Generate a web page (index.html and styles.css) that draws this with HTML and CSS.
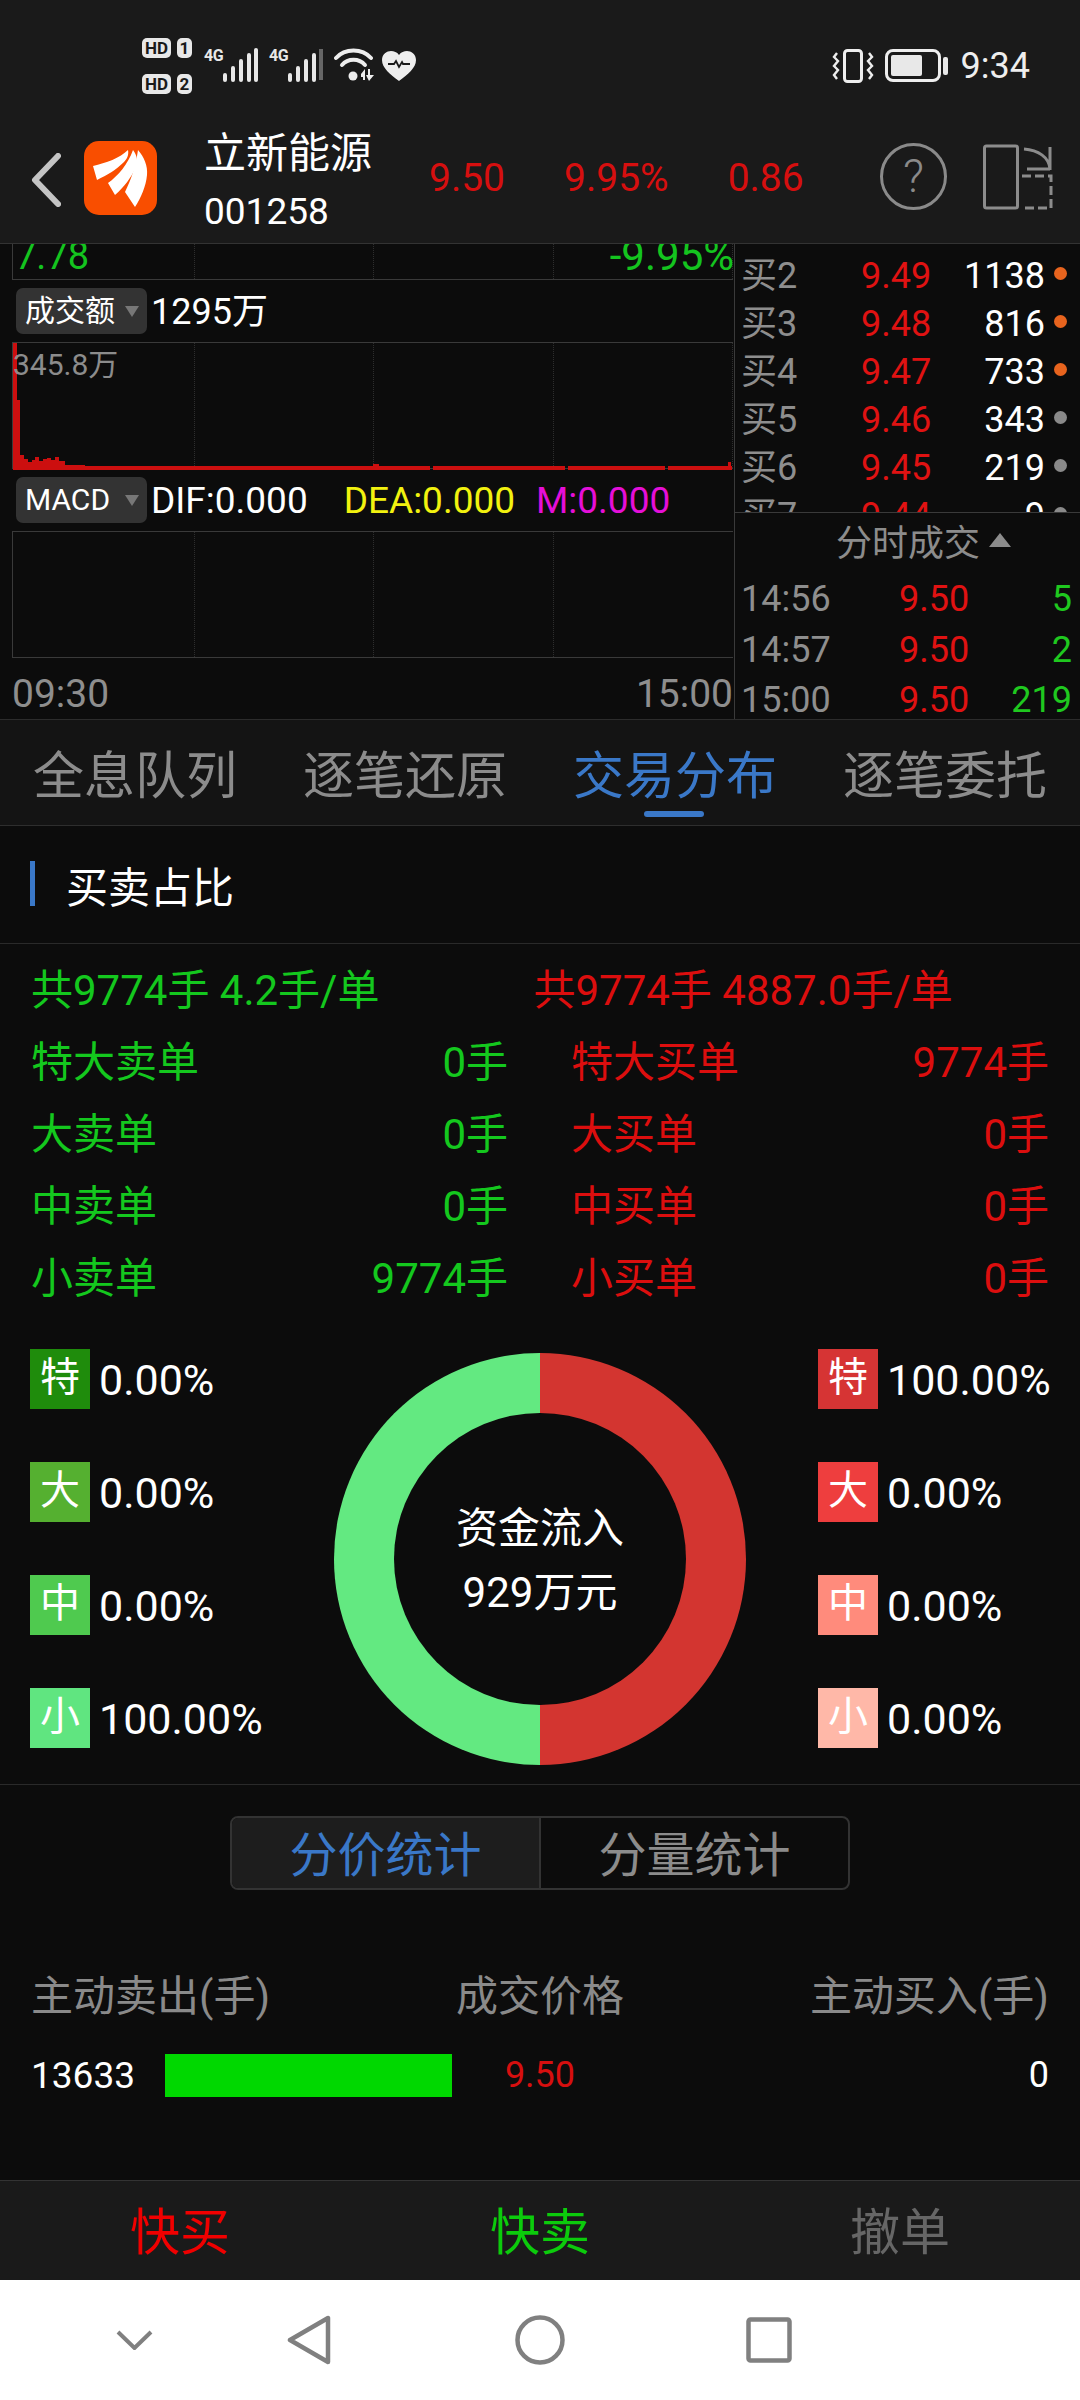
FILE: index.html
```html
<!DOCTYPE html>
<html lang="zh-CN">
<head>
<meta charset="utf-8">
<title>立新能源 001258</title>
<link rel="stylesheet" href="styles.css">
</head>
<body>
<div class="app">
  <div class="status">
    <div class="sims">
      <div class="sim"><span class="hd">HD</span><span class="simno">1</span></div>
      <div class="sim"><span class="hd">HD</span><span class="simno">2</span></div>
    </div>
    <div class="net"><span class="fourg">4G</span>
      <svg class="bars" width="36" height="34" viewBox="0 0 36 34"><g fill="none" stroke="#e8e8e8" stroke-width="4" stroke-linecap="round"><path d="M3 27v5M11 20v12M19 13v19M27 7v25"/><path d="M34 2v30"/></g></svg>
    </div>
    <div class="net second"><span class="fourg">4G</span>
      <svg class="bars" width="36" height="34" viewBox="0 0 36 34"><g fill="none" stroke-width="4" stroke-linecap="round"><path stroke="#e8e8e8" d="M3 27v5M11 20v12M19 13v19M27 7v25"/><path stroke="#666" stroke-linecap="butt" d="M34 1v31"/></g></svg>
    </div>
    <svg class="wifi" width="41" height="34" viewBox="0 0 41 34"><g fill="none" stroke="#eee" stroke-width="4" stroke-linecap="round"><path d="M2 10C11 0 28 0 37 10"/><path d="M8 17C14 10 25 10 31 17"/></g><circle cx="19" cy="28" r="4.5" fill="#eee"/><path d="M27 26l4-5v11h-2v-3h-2zM34 21h2v6h4l-5 6-3-6h2z" fill="#eee"/></svg>
    <svg class="heart" width="34" height="30" viewBox="0 0 34 30"><path d="M17 30C8 23 0 17 0 9 0 3 5 0 9 0c3 0 6 1 8 4 2-3 5-4 8-4 4 0 9 3 9 9 0 8-8 14-17 21z" fill="#eee"/><path d="M6 13h6l2-3 3 6 3-5 1 2h7" fill="none" stroke="#1a1a1a" stroke-width="1.8"/></svg>
    <div class="status-right">
      <svg class="vibrate" width="42" height="34" viewBox="0 0 42 34"><rect x="12.5" y="1.5" width="17" height="31" rx="3" fill="none" stroke="#eee" stroke-width="3"/><g fill="none" stroke="#eee" stroke-width="2.4"><path d="M5 4l-3 4 4 4-4 5 4 4-4 5 3 4"/><path d="M37 4l3 4-4 4 4 5-4 4 4 5-3 4"/></g></svg>
      <div class="battery"><span class="battery-fill"></span></div>
      <span class="battery-tip"></span>
      <span class="clock">9:34</span>
    </div>
  </div>

  <header class="header">
    <svg class="back" width="30" height="54" viewBox="0 0 30 54"><path d="M27 3L4 27l23 24" fill="none" stroke="#c4c4c4" stroke-width="6" stroke-linecap="round" stroke-linejoin="round"/></svg>
    <svg class="logo" width="73" height="74" viewBox="0 0 73 74"><rect width="73" height="74" rx="15" fill="#f94e00"/><g fill="#fff"><path d="M9 25C22 22 36 17 44 9 45 14 43 18 40 21 32 29 23 34 13 39Z"/><path d="M24 42C34 35 44 23 49 9 53 14 54 20 52 26 47 37 40 46 31 54Z"/><path d="M41 51C47 39 52 24 54 9 60 16 64 25 63 34 62 45 57 57 51 66Z"/></g></svg>
    <div class="stock">
      <div class="stock-name">立新能源</div>
      <div class="stock-code">001258</div>
    </div>
    <div class="quote-nums"><span>9.50</span><span>9.95%</span><span>0.86</span></div>
    <div class="help">?</div>
    <svg class="split" width="72" height="66" viewBox="0 0 72 66"><g fill="none" stroke="#8c8c8c" stroke-width="3"><rect x="1.5" y="2" width="33" height="62" rx="2"/><path d="M41 5c14 1 25 8 26 20M67 3v23M44 25h23"/><path d="M39 32h29v32H39" stroke-dasharray="9 4"/></g></svg>
  </header>

  <section class="market">
    <div class="chart">
      <div class="grid-panel price-tail">
        <span class="cell"></span><span class="cell"></span><span class="cell"></span><span class="cell"></span>
        <span class="tail-low">7.78</span><span class="tail-pct">-9.95%</span>
      </div>
      <div class="indicator">
        <span class="pill">成交额<i class="caret"></i></span>
        <span class="ind-value">1295万</span>
      </div>
      <div class="grid-panel vol-panel">
        <span class="cell"></span><span class="cell"></span><span class="cell"></span><span class="cell"></span>
        <span class="vol-max">345.8万</span>
        <svg class="vol-bars" width="721" height="127" viewBox="0 0 721 127" preserveAspectRatio="none"><g fill="#cc0f0f"><rect x="0" y="0" width="4" height="127"/><rect x="4" y="57" width="3" height="70"/><rect x="7" y="112" width="4" height="15"/><rect x="11" y="116" width="4" height="11"/><rect x="15" y="119" width="4" height="8"/><rect x="19" y="117" width="3" height="10"/><rect x="22" y="114" width="4" height="13"/><rect x="26" y="118" width="4" height="9"/><rect x="30" y="116" width="4" height="11"/><rect x="34" y="115" width="4" height="12"/><rect x="38" y="117" width="4" height="10"/><rect x="42" y="114" width="4" height="13"/><rect x="46" y="118" width="6" height="9"/><rect x="52" y="122" width="20" height="5"/><rect x="52" y="123" width="365" height="4"/><rect x="360" y="121" width="6" height="6"/><rect x="420" y="123" width="132" height="4"/><rect x="555" y="123" width="97" height="4"/><rect x="655" y="123" width="64" height="4"/><rect x="715" y="119" width="3" height="8"/></g></svg>
      </div>
      <div class="indicator">
        <span class="pill">MACD<i class="caret"></i></span>
        <span class="ind-value macd-v">DIF:0.000</span>
        <span class="ind-value macd-v dea">DEA:0.000</span>
        <span class="ind-value macd-v macd-m">M:0.000</span>
      </div>
      <div class="grid-panel macd-panel">
        <span class="cell"></span><span class="cell"></span><span class="cell"></span><span class="cell"></span>
      </div>
      <div class="axis"><span>09:30</span><span>15:00</span></div>
    </div>
    <aside class="side">
      <div class="depth">
        <div class="depth-row"><span class="d-label">买2</span><span class="d-price">9.49</span><span class="d-qty">1138</span><i class="dot hot"></i></div>
        <div class="depth-row"><span class="d-label">买3</span><span class="d-price">9.48</span><span class="d-qty">816</span><i class="dot hot"></i></div>
        <div class="depth-row"><span class="d-label">买4</span><span class="d-price">9.47</span><span class="d-qty">733</span><i class="dot hot"></i></div>
        <div class="depth-row"><span class="d-label">买5</span><span class="d-price">9.46</span><span class="d-qty">343</span><i class="dot"></i></div>
        <div class="depth-row"><span class="d-label">买6</span><span class="d-price">9.45</span><span class="d-qty">219</span><i class="dot"></i></div>
        <div class="depth-row"><span class="d-label">买7</span><span class="d-price">9.44</span><span class="d-qty">9</span><i class="dot"></i></div>
      </div>
      <div class="trades">
        <div class="trades-title">分时成交<i class="tri-up"></i></div>
        <div class="trade-row"><span class="t-time">14:56</span><span class="t-price">9.50</span><span class="t-qty">5</span></div>
        <div class="trade-row"><span class="t-time">14:57</span><span class="t-price">9.50</span><span class="t-qty">2</span></div>
        <div class="trade-row"><span class="t-time">15:00</span><span class="t-price">9.50</span><span class="t-qty">219</span></div>
      </div>
    </aside>
  </section>

  <nav class="tabs">
    <span class="tab">全息队列</span>
    <span class="tab">逐笔还原</span>
    <span class="tab active">交易分布</span>
    <span class="tab">逐笔委托</span>
  </nav>

  <main class="main">
    <h2 class="section-title"><span>买卖占比</span></h2>

    <div class="flows">
      <div class="totals">
        <span class="sell">共9774手 4.2手/单</span>
        <span class="buy">共9774手 4887.0手/单</span>
      </div>
      <div class="flow-row"><div class="flow sell"><span>特大卖单</span><span>0手</span></div><div class="flow buy"><span>特大买单</span><span>9774手</span></div></div>
      <div class="flow-row"><div class="flow sell"><span>大卖单</span><span>0手</span></div><div class="flow buy"><span>大买单</span><span>0手</span></div></div>
      <div class="flow-row"><div class="flow sell"><span>中卖单</span><span>0手</span></div><div class="flow buy"><span>中买单</span><span>0手</span></div></div>
      <div class="flow-row"><div class="flow sell"><span>小卖单</span><span>9774手</span></div><div class="flow buy"><span>小买单</span><span>0手</span></div></div>
    </div>

    <div class="share">
      <ul class="legend">
        <li><b class="badge g1">特</b>0.00%</li>
        <li><b class="badge g2">大</b>0.00%</li>
        <li><b class="badge g3">中</b>0.00%</li>
        <li><b class="badge g4">小</b>100.00%</li>
      </ul>
      <div class="donut">
        <div class="donut-hole">
          <div>资金流入</div>
          <div>929万元</div>
        </div>
      </div>
      <ul class="legend legend-right">
        <li><b class="badge r1">特</b>100.00%</li>
        <li><b class="badge r2">大</b>0.00%</li>
        <li><b class="badge r3">中</b>0.00%</li>
        <li><b class="badge r4">小</b>0.00%</li>
      </ul>
    </div>

    <div class="stats">
      <div class="segment">
        <span class="seg active">分价统计</span>
        <span class="seg">分量统计</span>
      </div>
      <div class="stat-head"><span>主动卖出(手)</span><span>成交价格</span><span>主动买入(手)</span></div>
      <div class="stat-row">
        <span class="stat-left">13633</span>
        <span class="stat-bar"></span>
        <span class="stat-price">9.50</span>
        <span class="stat-right">0</span>
      </div>
    </div>
  </main>

  <div class="actions">
    <span class="act-buy">快买</span>
    <span class="act-sell">快卖</span>
    <span class="act-cancel">撤单</span>
  </div>

  <div class="sysnav">
    <svg width="37" height="20" viewBox="0 0 37 20" class="nav-down"><path d="M2 2l16.500 16L35 2" fill="none" stroke="#808080" stroke-width="4"/></svg>
    <svg width="44" height="50" viewBox="0 0 44 50" class="nav-back"><path d="M41 3v44L3 25z" fill="none" stroke="#808080" stroke-width="4.500" stroke-linejoin="round"/></svg>
    <svg width="50" height="50" viewBox="0 0 50 50" class="nav-home"><circle cx="25" cy="25" r="22.500" fill="none" stroke="#808080" stroke-width="4.500"/></svg>
    <svg width="46" height="46" viewBox="0 0 46 46" class="nav-recent"><rect x="2.500" y="2.500" width="41" height="41" rx="2" fill="none" stroke="#808080" stroke-width="4.500"/></svg>
  </div>
</div>
</body>
</html>
```

FILE: styles.css
```css
* { box-sizing: border-box; }
html, body { margin: 0; padding: 0; background: #0c0c0c; }
body { font-family: Roboto, "Noto Sans CJK SC", sans-serif; color: #fff; }
ul { list-style: none; margin: 0; padding: 0; }
i { font-style: normal; }
b { font-weight: 400; }

.app { width: 1080px; height: 2400px; display: flex; flex-direction: column; overflow: hidden; background: #0c0c0c; }

/* status bar */
.status { height: 110px; flex: none; background: #1a1a1a; display: flex; align-items: flex-start; padding: 38px 0 0 142px; }
.sims { display: flex; flex-direction: column; gap: 16px; }
.sim { display: flex; gap: 6px; }
.hd, .simno { height: 20px; background: #e8e8e8; color: #1a1a1a; font-size: 17px; line-height: 20px; font-weight: 700; text-align: center; border-radius: 5px; }
.hd { width: 29px; }
.simno { width: 15px; }
.net { display: flex; align-items: flex-start; margin: 10px 0 0 12px; position: relative; }
.net.second { margin-left: 11px; }
.fourg { width: 18px; font-size: 16px; line-height: 15px; font-weight: 700; color: #e8e8e8; letter-spacing: -0.5px; white-space: nowrap; }
.bars { display: block; }
.wifi { margin: 10px 0 0 11px; }
.heart { margin: 13px 0 0 7px; }
.status-right { margin-left: auto; display: flex; align-items: center; height: 33px; margin-top: 11px; padding-right: 50px; }
.vibrate { margin-right: 11px; }
.battery { width: 56px; height: 33px; border: 3.5px solid #eee; border-radius: 8px; padding: 3px; }
.battery-fill { display: block; width: 31px; height: 100%; background: #e8e8e8; border-radius: 2px; }
.battery-tip { width: 5px; height: 18px; background: #e8e8e8; border-radius: 2px; margin-left: 2px; }
.clock { margin-left: 13px; font-size: 36px; line-height: 33px; color: #eee; padding-top: 2px; }

/* header */
.header { height: 134px; flex: none; background: #1a1a1a; border-bottom: 1px solid #333; display: flex; align-items: center; padding-left: 31px; }
.back { flex: none; margin-right: 23px; margin-top: 6px; }
.logo { flex: none; margin-top: 2px; }
.stock { margin-left: 47px; width: 225px; flex: none; margin-top: 10px; }
.stock-name { font-size: 42px; line-height: 50px; }
.stock-code { font-size: 37px; line-height: 44px; margin-top: 11px; }
.quote-nums { display: flex; gap: 59px; width: 373px; flex: none; margin-top: 3px; color: #d60f0f; font-size: 39px; line-height: 46px; }
.help { flex: none; margin-left: 78px; width: 67px; height: 67px; border: 3px solid #8a8a8a; border-radius: 50%; color: #8a8a8a; font-size: 46px; font-weight: 300; line-height: 61px; text-align: center; }
.help + .split { margin-left: 36px; }
.split { flex: none; }

/* market */
.market { height: 476px; flex: none; display: flex; background: #0c0c0c; border-bottom: 1px solid #2c2c2c; }
.chart { width: 734px; flex: none; padding-left: 12px; padding-right: 1px; }
.side { flex: 1; border-left: 1px solid #3a3a3a; display: flex; flex-direction: column; min-width: 0; }

.grid-panel { position: relative; display: grid; grid-template-columns: 182px 179px 180px 1fr; border-left: 1px solid #3a3a3a; border-bottom: 1px solid #3a3a3a; }
.cell { border-right: 1px dotted #2e2e2e; }
.cell:last-of-type { border-right: 0; }
.price-tail { height: 36px; overflow: hidden; }
.tail-low, .tail-pct { position: absolute; bottom: 1px; line-height: 44px; color: #14c41f; font-size: 38px; }
.tail-low { left: 2px; }
.tail-pct { right: -1px; font-size: 42px; }
.vol-panel { height: 127px; border-top: 1px solid #3a3a3a; }
.macd-panel { height: 127px; border-top: 1px solid #3a3a3a; }
.vol-max { position: absolute; left: 0; top: 7px; font-size: 30px; line-height: 30px; color: #8c8c8c; z-index: 1; }
.vol-bars { position: absolute; left: 0; top: 0; width: 721px; height: 127px; }

.indicator { height: 63px; display: flex; align-items: center; margin-left: 4px; margin-top: -1px; }
.pill { width: 131px; height: 46px; background: #333; border-radius: 7px; display: flex; align-items: center; padding-left: 9px; font-size: 30px; line-height: 46px; position: relative; flex: none; }
.caret { position: absolute; right: 8px; top: 18px; border: 7px solid transparent; border-top: 11px solid #777; border-bottom: 0; }
.ind-value { margin-left: 4px; padding-top: 2px; font-size: 36px; line-height: 50px; white-space: nowrap; }
.macd-v { font-size: 37px; }
.dea { margin-left: 36px; color: #f2f20f; }
.macd-m { margin-left: 21px; color: #e50fd8; }

.axis { height: 61px; display: flex; justify-content: space-between; align-items: center; color: #8e8e8e; font-size: 39px; padding-top: 11px; }

/* depth */
.depth { height: 269px; overflow: hidden; border-bottom: 1px solid #3a3a3a; padding-top: 8px; flex: none; }
.depth-row { height: 48px; display: grid; grid-template-columns: 120px 69px 115px 22px; align-items: center; padding-left: 6px; font-size: 36px; line-height: 48px; }
.d-label { color: #8e8e8e; }
.d-price { color: #e01212; }
.d-qty { text-align: right; }
.dot { width: 13px; height: 13px; border-radius: 50%; background: #8a8a8a; margin-left: 9px; margin-top: -5px; }
.dot.hot { background: #e8641e; }

.trades { flex: 1; padding: 9px 8px 0 6px; font-size: 36px; }
.trades-title { height: 44px; color: #8c8c8c; display: flex; align-items: center; padding-left: 95px; line-height: 44px; margin-bottom: 8px; }
.tri-up { margin-left: 9px; margin-top: -8px; border: 11px solid transparent; border-bottom: 14px solid #8c8c8c; border-top: 0; }
.trade-row { height: 50.5px; display: grid; grid-template-columns: 158px 70px 1fr; align-items: center; line-height: 50px; }
.t-time { color: #8e8e8e; }
.t-price { color: #e01212; }
.t-qty { text-align: right; color: #1fc81f; }

/* tabs */
.tabs { height: 106px; flex: none; background: #141414; border-bottom: 1px solid #2e2e2e; display: flex; gap: 67px; padding-left: 33px; }
.tab { width: 203px; font-size: 51px; line-height: 60px; margin-top: 27px; color: #8c8c8c; white-space: nowrap; position: relative; }
.tab.active { color: #3a78c8; }
.tab.active::after { content: ""; position: absolute; left: 71px; top: 64px; width: 60px; height: 6px; border-radius: 3px; background: #3a78c8; }

/* content */
.main { flex: 1; display: flex; flex-direction: column; min-height: 0; background: #0c0c0c; }
.section-title { margin: 0; height: 118px; flex: none; border-bottom: 1px solid #2a2a2a; display: flex; align-items: center; padding-left: 30px; font-weight: 400; font-size: 42px; }
.section-title::before { content: ""; width: 5px; height: 45px; background: #3a78c8; margin-right: 31px; margin-top: -3px; }

.flows { padding: 11px 31px 0; flex: none; font-size: 42px; }
.totals { height: 72px; display: flex; align-items: center; font-size: 42px; line-height: 72px; white-space: nowrap; }
.totals .buy { margin-left: 154px; }
.sell { color: #14c81e; }
.buy { color: #dc0e0e; }
.flow-row { height: 72px; display: grid; grid-template-columns: 477px 478px; gap: 63px; }
.flow { display: flex; justify-content: space-between; align-items: center; line-height: 72px; }

.share { height: 470px; flex: none; border-bottom: 1px solid #2a2a2a; display: grid; grid-template-columns: 334px 412px 1fr; padding-top: 34px; }
.legend { display: flex; flex-direction: column; gap: 53px; padding-left: 30px; font-size: 43px; }
.legend li { height: 60px; padding-top: 2px; display: flex; align-items: center; white-space: nowrap; }
.legend-right { padding-left: 72px; }
.badge { width: 60px; height: 60px; flex: none; margin-top: -2px; text-align: center; line-height: 58px; font-size: 40px; margin-right: 9px; color: #fff; }
.g1 { background: #1f8c0c; }
.g2 { background: #55b030; }
.g3 { background: #4fca4f; }
.g4 { background: #60e580; }
.r1 { background: #d63434; }
.r2 { background: #ee3e3e; }
.r3 { background: #ff8b7c; }
.r4 { background: #ffb8a8; }
.donut { width: 412px; height: 412px; margin-top: 4px; border-radius: 50%; background: linear-gradient(90deg, #63e981 50%, #d33530 50%); display: flex; align-items: center; justify-content: center; }
.donut-hole { width: 292px; height: 292px; border-radius: 50%; background: #0c0c0c; display: flex; flex-direction: column; justify-content: center; align-items: center; font-size: 42px; line-height: 64px; padding-top: 4px; }

.stats { flex: 1; padding: 31px 31px 0; }
.segment { width: 620px; height: 74px; margin: 0 auto; display: flex; border: 2px solid #333; border-radius: 8px; }
.seg { flex: 1; text-align: center; font-size: 48px; line-height: 70px; padding-top: 3px; color: #8c8c8c; }
.seg.active { background: #1d1d1d; color: #3a78c8; border-right: 2px solid #333; border-radius: 6px 0 0 6px; }
.stat-head { margin-top: 72px; height: 60px; display: flex; justify-content: space-between; align-items: center; font-size: 42px; color: #8a8a8a; }
.stat-row { margin-top: 23px; height: 60px; display: grid; grid-template-columns: 134px 287px 176px 1fr; align-items: center; font-size: 36px; }
.stat-left { font-size: 37px; }
.stat-bar { height: 43px; background: #00d800; }
.stat-price { text-align: center; color: #d60f0f; }
.stat-right { text-align: right; }

/* bottom */
.actions { height: 100px; flex: none; background: #1a1a1a; border-top: 1px solid #333; display: grid; grid-template-columns: repeat(3, 360px); text-align: center; font-size: 50px; line-height: 105px; }
.act-buy { color: #f00000; }
.act-sell { color: #0ccb0c; }
.act-cancel { color: #666; }

.sysnav { height: 120px; flex: none; background: #fff; display: flex; align-items: center; padding-left: 116px; }
.nav-down { margin-right: 134px; }
.nav-back { margin-right: 184px; }
.nav-home { margin-right: 181px; }
```
